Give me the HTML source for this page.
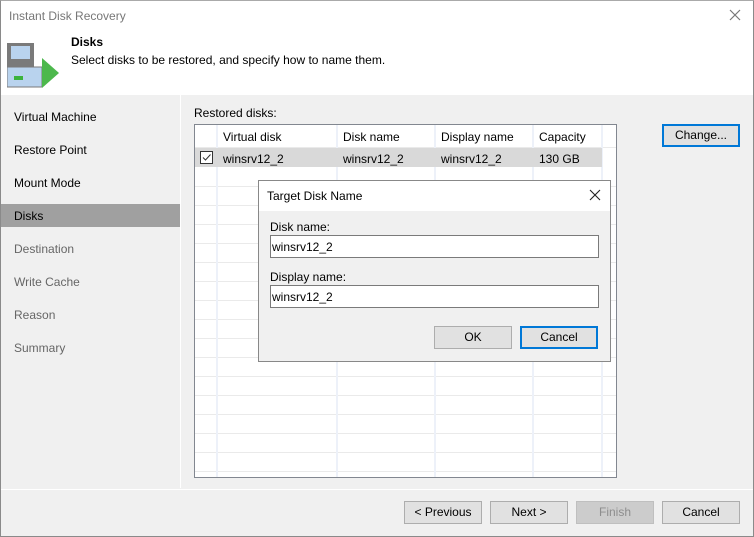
<!DOCTYPE html><html><head><style>
*{margin:0;padding:0;box-sizing:border-box}
body{width:754px;height:537px;position:relative;overflow:hidden;font-family:"Liberation Sans",sans-serif;font-size:12px;color:#000;background:#f0f0f0}
.a{position:absolute}
.nav{left:14px;color:#000}
.btn{position:absolute;border:1px solid #adadad;background:#e1e1e1;text-align:center;line-height:21px;font-size:12px}
.cl{position:absolute;top:125px;width:2px;height:352px;background:#edf1f9}
.rl{position:absolute;left:195px;width:421px;height:1px;background:#eaeaea}
input{font-family:inherit}
</style></head><body>
<div class="a" style="left:0;top:0;width:754px;height:95px;background:#fff"></div>
<div class="a" style="left:9px;top:9px;color:#777;font-size:12px">Instant Disk Recovery</div>
<svg class="a" style="left:728px;top:8px" width="14" height="14"><path d="M2 2L12 12M12 2L2 12" stroke="#777" stroke-width="1.2"/></svg>
<svg class="a" style="left:7px;top:42px" width="54" height="48">
<rect x="0" y="1" width="27" height="24" fill="#7a7a7a"/><rect x="4" y="4" width="19" height="13" fill="#b9d3ee"/>
<rect x="0" y="25" width="35" height="20" fill="#b9d3ee" stroke="#7a7a7a"/><rect x="7" y="34" width="9" height="4" fill="#3cb33c"/>
<path d="M35 16L52 31L35 46Z" fill="#4cb84c"/></svg>
<div class="a" style="left:71px;top:35px;font-weight:bold">Disks</div>
<div class="a" style="left:71px;top:53px">Select disks to be restored, and specify how to name them.</div>
<div class="a" style="left:180px;top:95px;width:1px;height:393px;background:#fff"></div>
<div class="a nav" style="top:110px">Virtual Machine</div>
<div class="a nav" style="top:143px">Restore Point</div>
<div class="a nav" style="top:176px">Mount Mode</div>
<div class="a" style="left:1px;top:204px;width:179px;height:23px;background:#a0a0a0"></div>
<div class="a nav" style="top:209px">Disks</div>
<div class="a nav" style="top:242px;color:#666">Destination</div>
<div class="a nav" style="top:275px;color:#666">Write Cache</div>
<div class="a nav" style="top:308px;color:#666">Reason</div>
<div class="a nav" style="top:341px;color:#666">Summary</div>
<div class="a" style="left:194px;top:106px">Restored disks:</div>
<div class="a" style="left:194px;top:124px;width:423px;height:354px;background:#fff;border:1px solid #828790"></div>
<div class="rl" style="top:147px"></div>
<div class="rl" style="top:186px"></div><div class="rl" style="top:205px"></div><div class="rl" style="top:224px"></div><div class="rl" style="top:243px"></div><div class="rl" style="top:262px"></div><div class="rl" style="top:281px"></div><div class="rl" style="top:300px"></div><div class="rl" style="top:319px"></div><div class="rl" style="top:338px"></div><div class="rl" style="top:357px"></div><div class="rl" style="top:376px"></div><div class="rl" style="top:395px"></div><div class="rl" style="top:414px"></div><div class="rl" style="top:433px"></div><div class="rl" style="top:452px"></div><div class="rl" style="top:471px"></div>
<div class="cl" style="left:216px"></div><div class="cl" style="left:336px"></div><div class="cl" style="left:434px"></div><div class="cl" style="left:532px"></div><div class="cl" style="left:601px"></div>
<div class="a" style="left:195px;top:148px;width:407px;height:19px;background:#d9d9d9"></div>
<div class="a" style="left:223px;top:130px">Virtual disk</div><div class="a" style="left:343px;top:130px">Disk name</div><div class="a" style="left:441px;top:130px">Display name</div><div class="a" style="left:539px;top:130px">Capacity</div>
<div class="a" style="left:200px;top:151px;width:13px;height:13px;border:1px solid #333;background:#fff"></div>
<svg class="a" style="left:200px;top:151px" width="13" height="13"><path d="M3 6.5L5.5 9L10.5 3.5" stroke="#333" fill="none"/></svg>
<div class="a" style="left:223px;top:152px">winsrv12_2</div><div class="a" style="left:343px;top:152px">winsrv12_2</div><div class="a" style="left:441px;top:152px">winsrv12_2</div><div class="a" style="left:539px;top:152px">130 GB</div>
<div class="btn" style="left:662px;top:124px;width:78px;height:23px;border:2px solid #0078d7;line-height:19px">Change...</div>
<div class="a" style="left:258px;top:180px;width:353px;height:182px;background:#f0f0f0;border:1px solid #888"></div>
<div class="a" style="left:259px;top:181px;width:351px;height:30px;background:#fff"></div>
<div class="a" style="left:267px;top:189px">Target Disk Name</div>
<svg class="a" style="left:588px;top:188px" width="14" height="14"><path d="M2 2L12 12M12 2L2 12" stroke="#222" stroke-width="1.1"/></svg>
<div class="a" style="left:270px;top:220px">Disk name:</div>
<div class="a" style="left:270px;top:235px;width:329px;height:23px;background:#fff;border:1px solid #7a7a7a;padding:4px 1px">winsrv12_2</div>
<div class="a" style="left:270px;top:270px">Display name:</div>
<div class="a" style="left:270px;top:285px;width:329px;height:23px;background:#fff;border:1px solid #7a7a7a;padding:4px 1px">winsrv12_2</div>
<div class="btn" style="left:434px;top:326px;width:78px;height:23px">OK</div>
<div class="btn" style="left:520px;top:326px;width:78px;height:23px;border:2px solid #0078d7;line-height:19px">Cancel</div>
<div class="a" style="left:0;top:489px;width:754px;height:1px;background:#fff"></div>
<div class="btn" style="left:404px;top:501px;width:78px;height:23px">&lt; Previous</div>
<div class="btn" style="left:490px;top:501px;width:78px;height:23px">Next &gt;</div>
<div class="btn" style="left:576px;top:501px;width:78px;height:23px;background:#ccc;border-color:#bfbfbf;color:#8d8d8d">Finish</div>
<div class="btn" style="left:662px;top:501px;width:78px;height:23px">Cancel</div>
<div class="a" style="left:0;top:0;width:754px;height:537px;border:1px solid #8a8a8a;border-top-color:#aaa"></div>
</body></html>
